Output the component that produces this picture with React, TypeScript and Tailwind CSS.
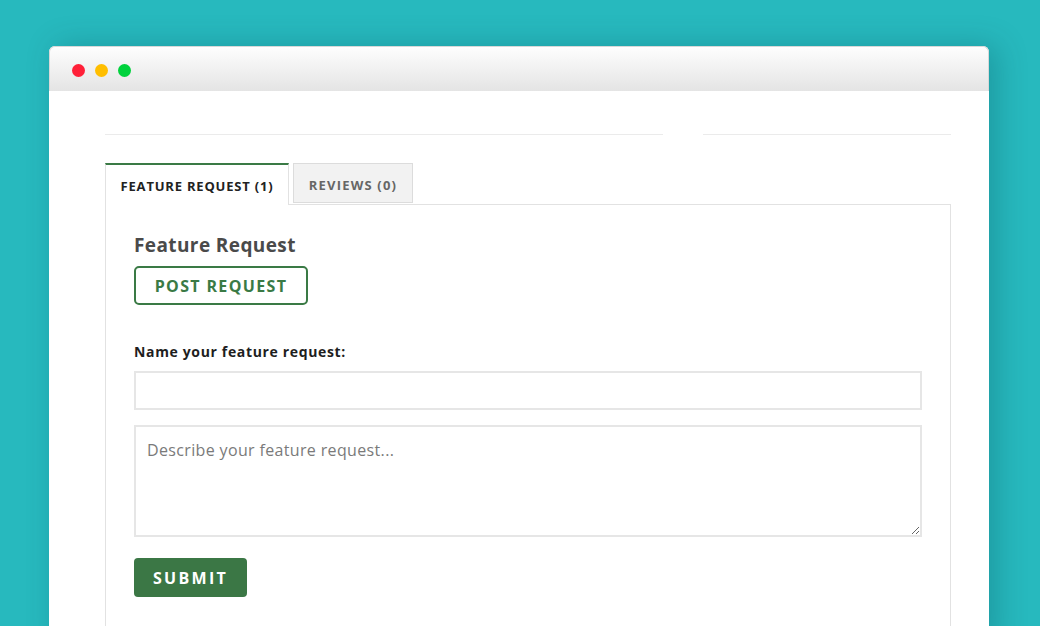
import React from "react";

export default function App() {
  const font = { fontFamily: '"Open Sans", "Noto Sans", sans-serif' };
  return (
    <div className="w-[1040px] h-[626px] bg-[#27b9be] overflow-hidden pt-[46px] pl-[49px]" style={font}>
      <div className="w-[940px] h-[600px] bg-white rounded-t-[6px] shadow-[8px_0_30px_rgba(0,60,70,0.25)] flex flex-col">
        <div className="h-[45px] rounded-t-[6px] bg-gradient-to-b from-[#fefefe] to-[#e4e4e4] border-t border-x border-[#d8d8d8] flex items-center gap-[10px] pl-[22px] pt-[3px]">
          <span className="w-[13px] h-[13px] rounded-full bg-[#ff2038]" />
          <span className="w-[13px] h-[13px] rounded-full bg-[#ffbe00]" />
          <span className="w-[13px] h-[13px] rounded-full bg-[#00d23c]" />
        </div>
        <div className="pl-[56px] pr-[38px] pt-[43px] flex-1 flex flex-col">
          <div className="flex gap-[40px]">
            <div className="h-px bg-[#ebebeb] w-[558px]" />
            <div className="h-px bg-[#ebebeb] flex-1" />
          </div>
          <div className="flex items-end mt-[28px] gap-[4px] relative z-10">
            <div className="w-[184px] h-[42px] pt-[3px] border-t-2 border-x border-t-[#3a7a45] border-x-[#e2e2e2] bg-white flex items-center justify-center text-[13px] font-bold tracking-[0.8px] text-[#222] -mb-px">
              FEATURE REQUEST (1)
            </div>
            <div className="w-[120px] h-[40px] pt-[5px] border border-[#dcdcdc] bg-[#f2f2f2] flex items-center justify-center text-[13px] font-bold tracking-[1.2px] text-[#666] mb-px">
              REVIEWS (0)
            </div>
          </div>
          <div className="flex-1 border border-[#e2e2e2] border-b-0 pl-[28px] pr-[28px] pt-[27px]">
            <div className="text-[19px] font-bold text-[#4a4a4a] leading-[26px] tracking-[0.4px]">Feature Request</div>
            <button className="mt-[8px] w-[174px] h-[39px] border-2 border-[#3a7a45] rounded-[5px] text-[#3a7a45] font-bold text-[16px] tracking-[1.35px]">
              POST REQUEST
            </button>
            <div className="mt-[38px] text-[14px] font-bold text-[#1e1e1e] leading-[18px] tracking-[0.65px]">Name your feature request:</div>
            <input className="mt-[10px] block w-full h-[39px] border-2 border-[#e6e6e6] outline-none" />
            <textarea
              className="mt-[15px] block w-full h-[112px] border-2 border-[#e6e6e6] outline-none px-[11px] py-[11px] text-[16px] text-[#333] tracking-[0.35px] placeholder:text-[#7a7a7a]"
              placeholder="Describe your feature request..."
              style={font}
            />
            <button className="mt-[21px] w-[113px] h-[39px] bg-[#3b7745] rounded-[4px] text-white font-bold text-[16px] tracking-[2.3px]">
              SUBMIT
            </button>
          </div>
        </div>
      </div>
    </div>
  );
}
